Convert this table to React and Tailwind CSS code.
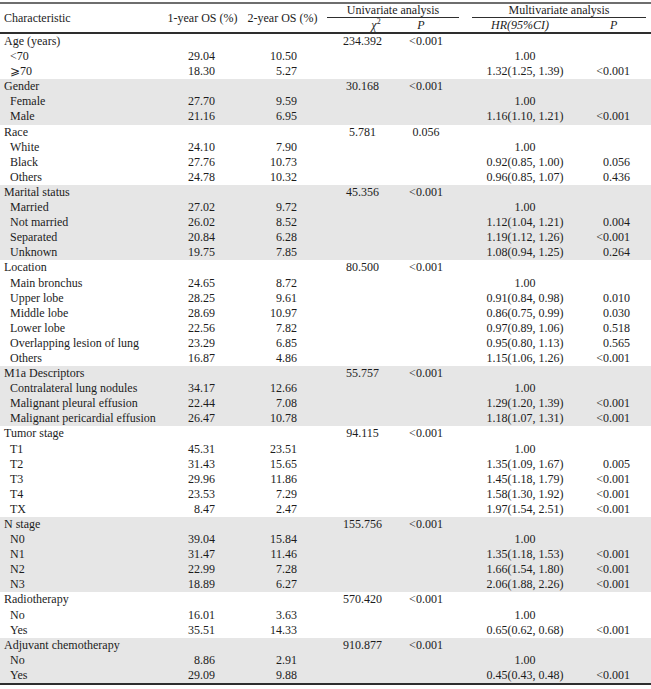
import React from "react";

const groups = [
  { label: "Age (years)", chi: "234.392", p: "<0.001", items: [
    ["<70", "29.04", "10.50", "1.00", ""],
    ["⩾70", "18.30", "5.27", "1.32(1.25, 1.39)", "<0.001"],
  ]},
  { label: "Gender", chi: "30.168", p: "<0.001", items: [
    ["Female", "27.70", "9.59", "1.00", ""],
    ["Male", "21.16", "6.95", "1.16(1.10, 1.21)", "<0.001"],
  ]},
  { label: "Race", chi: "5.781", p: "0.056", items: [
    ["White", "24.10", "7.90", "1.00", ""],
    ["Black", "27.76", "10.73", "0.92(0.85, 1.00)", "0.056"],
    ["Others", "24.78", "10.32", "0.96(0.85, 1.07)", "0.436"],
  ]},
  { label: "Marital status", chi: "45.356", p: "<0.001", items: [
    ["Married", "27.02", "9.72", "1.00", ""],
    ["Not married", "26.02", "8.52", "1.12(1.04, 1.21)", "0.004"],
    ["Separated", "20.84", "6.28", "1.19(1.12, 1.26)", "<0.001"],
    ["Unknown", "19.75", "7.85", "1.08(0.94, 1.25)", "0.264"],
  ]},
  { label: "Location", chi: "80.500", p: "<0.001", items: [
    ["Main bronchus", "24.65", "8.72", "1.00", ""],
    ["Upper lobe", "28.25", "9.61", "0.91(0.84, 0.98)", "0.010"],
    ["Middle lobe", "28.69", "10.97", "0.86(0.75, 0.99)", "0.030"],
    ["Lower lobe", "22.56", "7.82", "0.97(0.89, 1.06)", "0.518"],
    ["Overlapping lesion of lung", "23.29", "6.85", "0.95(0.80, 1.13)", "0.565"],
    ["Others", "16.87", "4.86", "1.15(1.06, 1.26)", "<0.001"],
  ]},
  { label: "M1a Descriptors", chi: "55.757", p: "<0.001", items: [
    ["Contralateral lung nodules", "34.17", "12.66", "1.00", ""],
    ["Malignant pleural effusion", "22.44", "7.08", "1.29(1.20, 1.39)", "<0.001"],
    ["Malignant pericardial effusion", "26.47", "10.78", "1.18(1.07, 1.31)", "<0.001"],
  ]},
  { label: "Tumor stage", chi: "94.115", p: "<0.001", items: [
    ["T1", "45.31", "23.51", "1.00", ""],
    ["T2", "31.43", "15.65", "1.35(1.09, 1.67)", "0.005"],
    ["T3", "29.96", "11.86", "1.45(1.18, 1.79)", "<0.001"],
    ["T4", "23.53", "7.29", "1.58(1.30, 1.92)", "<0.001"],
    ["TX", "8.47", "2.47", "1.97(1.54, 2.51)", "<0.001"],
  ]},
  { label: "N stage", chi: "155.756", p: "<0.001", items: [
    ["N0", "39.04", "15.84", "1.00", ""],
    ["N1", "31.47", "11.46", "1.35(1.18, 1.53)", "<0.001"],
    ["N2", "22.99", "7.28", "1.66(1.54, 1.80)", "<0.001"],
    ["N3", "18.89", "6.27", "2.06(1.88, 2.26)", "<0.001"],
  ]},
  { label: "Radiotherapy", chi: "570.420", p: "<0.001", items: [
    ["No", "16.01", "3.63", "1.00", ""],
    ["Yes", "35.51", "14.33", "0.65(0.62, 0.68)", "<0.001"],
  ]},
  { label: "Adjuvant chemotherapy", chi: "910.877", p: "<0.001", items: [
    ["No", "8.86", "2.91", "1.00", ""],
    ["Yes", "29.09", "9.88", "0.45(0.43, 0.48)", "<0.001"],
  ]},
];

const cols = "grid grid-cols-[165px_75px_85px_75px_60px_130px_61px]";

function Row({ label, indent, c2, c3, c4, c5, c6, c7 }) {
  return (
    <div className={`${cols} h-[15.1px] leading-[15.1px] whitespace-nowrap`}>
      <div className={indent ? "pl-[10px]" : "pl-[4px]"}>{label}</div>
      <div className="text-right pr-[25px]">{c2}</div>
      <div className="text-right pr-[28px]">{c3}</div>
      <div className="text-center">{c4}</div>
      <div className="text-center pr-[8px]">{c5}</div>
      <div className="text-center">{c6}</div>
      <div className="text-right pr-[21px]">{c7}</div>
    </div>
  );
}

export default function App() {
  return (
    <div className="w-[651px] h-[689px] bg-white text-[#1c1c1c] text-[12px] font-['Liberation_Serif','DejaVu_Serif',serif] overflow-hidden">
      <div className={`${cols} mt-[2px] border-t-2 border-t-[#6e6e6e] border-b-2 border-b-[#2e2e2e] grid-rows-[14px_14px] whitespace-nowrap`}>
        <div className="row-span-2 col-start-1 row-start-1 flex items-center pl-[4px]">Characteristic</div>
        <div className="row-span-2 col-start-2 row-start-1 flex items-center justify-center">1-year OS (%)</div>
        <div className="row-span-2 col-start-3 row-start-1 flex items-center justify-center">2-year OS (%)</div>
        <div className="col-span-2 col-start-4 row-start-1 ml-[2px] mr-[1px] border-b border-[#2e2e2e] text-center leading-[13px]">Univariate analysis</div>
        <div className="col-span-2 col-start-6 row-start-1 ml-[12px] mr-[5px] border-b border-[#2e2e2e] text-center leading-[13px]">Multivariate analysis</div>
        <div className="col-start-4 row-start-2 text-center pl-[27px] leading-[14px]">
          <i>χ</i><sup className="text-[8px] leading-none -top-[5px]">2</sup>
        </div>
        <div className="col-start-5 row-start-2 text-center pr-[18px] leading-[14px]"><i>P</i></div>
        <div className="col-start-6 row-start-2 text-center pr-[10px] leading-[14px]"><i>HR(95%CI)</i></div>
        <div className="col-start-7 row-start-2 pl-[20px] leading-[14px]"><i>P</i></div>
      </div>
      <div className="border-b-2 border-[#2e2e2e]">
        {groups.map((g, gi) => (
          <div key={g.label} className={gi % 2 === 1 ? "bg-[#e6e6e6]" : "bg-white"}>
            <Row label={g.label} c4={g.chi} c5={g.p} />
            {g.items.map((it, ii) => (
              <Row key={ii} indent label={it[0]} c2={it[1]} c3={it[2]} c6={it[3]} c7={it[4]} />
            ))}
          </div>
        ))}
      </div>
    </div>
  );
}
